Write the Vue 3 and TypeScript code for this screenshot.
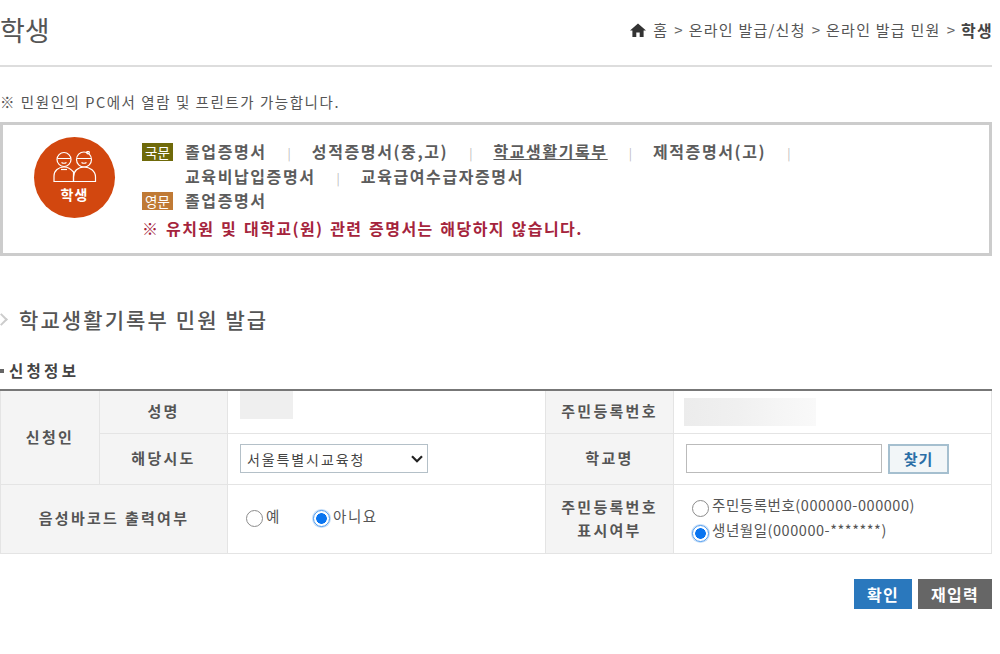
<template>
  <div class="page">
    <header class="top">
      <h1 class="title">학생</h1>
      <nav class="crumbs">
        <svg class="home" viewBox="0 0 16 14" width="16" height="14">
          <path d="M8 0.5 L16 7.5 H13.6 V14 H9.7 V9.5 H6.3 V14 H2.4 V7.5 H0 Z" fill="#333" />
        </svg>
        <span>홈</span><i>&gt;</i><span>온라인 발급/신청</span><i>&gt;</i><span>온라인 발급 민원</span><i>&gt;</i><b>학생</b>
      </nav>
    </header>

    <p class="note">※ 민원인의 PC에서 열람 및 프린트가 가능합니다.</p>

    <section class="infobox">
      <div class="badge">
        <svg viewBox="0 0 44 32" width="44" height="32" fill="none" stroke="#fff" stroke-width="1.2">
          <circle cx="11" cy="8.5" r="7" />
          <circle cx="31" cy="8.5" r="7.5" />
          <circle cx="35" cy="1.6" r="1.3" />
          <path d="M4.5 7.5 H17.5 M24 7.5 H38 M8.5 11.5 Q11 13 13.5 11.5 M28.5 11.5 Q31 13 33.5 11.5" />
          <path d="M1 30.5 V25 C1 19.5 5.5 16 11 16 C15 16 18 18 20.5 21 V30.5 Z" />
          <path d="M20.5 30.5 V26 C20.5 20 25 16 31 16 C37 16 42.5 20 42.5 26 V30.5 Z" />
          <path d="M8 18.5 H14" />
        </svg>
        <span>학생</span>
      </div>
      <div class="certs">
        <div class="cert-row">
          <span class="tag kor">국문</span>
          <div class="links">
            <template v-for="(name, i) in korCerts" :key="name">
              <a :class="{ active: name === '학교생활기록부' }">{{ name }}</a>
              <em v-if="i !== korCerts.length - 1">|</em>
            </template>
          </div>
        </div>
        <div class="cert-row">
          <span class="tag eng">영문</span>
          <div class="links"><a>졸업증명서</a></div>
        </div>
        <p class="warn">※ 유치원 및 대학교(원) 관련 증명서는 해당하지 않습니다.</p>
      </div>
    </section>

    <h2 class="section-title"><i class="chev"></i>학교생활기록부 민원 발급</h2>
    <h3 class="sub-title">신청정보</h3>

    <table class="form">
      <colgroup>
        <col style="width: 99px" />
        <col style="width: 128px" />
        <col style="width: 318px" />
        <col style="width: 128px" />
        <col />
      </colgroup>
      <tbody>
        <tr class="r1">
          <th rowspan="2">신청인</th>
          <th>성명</th>
          <td><div class="blur name"></div></td>
          <th>주민등록번호</th>
          <td><div class="blur rrn"></div></td>
        </tr>
        <tr class="r2">
          <th>해당시도</th>
          <td>
            <div class="select-wrap">
              <select class="sido">
                <option>서울특별시교육청</option>
              </select>
              <svg class="caret" viewBox="0 0 12 8" width="12" height="8">
                <path d="M1 1.2 L6 6.2 L11 1.2" fill="none" stroke="#222" stroke-width="2.2" />
              </svg>
            </div>
          </td>
          <th>학교명</th>
          <td class="school">
            <input type="text" class="school-input" />
            <button class="find">찾기</button>
          </td>
        </tr>
        <tr class="r3">
          <th colspan="2">음성바코드 출력여부</th>
          <td>
            <div class="radios">
              <label><input type="radio" name="voice" />예</label>
              <label><input type="radio" name="voice" checked />아니요</label>
            </div>
          </td>
          <th>주민등록번호<br />표시여부</th>
          <td>
            <div class="radios stack">
              <label><input type="radio" name="show" />주민등록번호(000000-000000)</label>
              <label><input type="radio" name="show" checked />생년월일(000000-*******)</label>
            </div>
          </td>
        </tr>
      </tbody>
    </table>

    <div class="actions">
      <button class="btn ok">확인</button>
      <button class="btn reset">재입력</button>
    </div>
  </div>
</template>

<script setup lang="ts">
const korCerts: string[] = [
  "졸업증명서",
  "성적증명서(중,고)",
  "학교생활기록부",
  "제적증명서(고)",
  "교육비납입증명서",
  "교육급여수급자증명서",
];
</script>

<style>
body {
  background: #fff;
}
</style>

<style scoped>
.page {
  width: 992px;
  height: 654px;
  overflow: hidden;
  font-family: "Noto Sans CJK KR", "Liberation Sans", sans-serif;
  color: #555;
  font-size: 14px;
}

.top {
  display: flex;
  justify-content: space-between;
  align-items: center;
  height: 59px;
  padding-bottom: 6px;
  border-bottom: 2px solid #ddd;
}
.title {
  margin: 0;
  font-size: 27px;
  font-weight: 400;
  line-height: 59px;
  color: #555;
}
.crumbs {
  display: flex;
  align-items: center;
  gap: 6px;
  font-size: 15px;
  letter-spacing: 1.25px;
  color: #555;
}
.crumbs i {
  font-style: normal;
  color: #666;
  letter-spacing: 0;
}
.crumbs b {
  color: #444;
  font-size: 16px;
  font-weight: 700;
  letter-spacing: 1.3px;
  margin-right: -1px;
}
.home {
  margin-right: 1px;
}

.note {
  margin: 25px 0 0;
  height: 30px;
  line-height: 20px;
  font-size: 14.5px;
  letter-spacing: 1.55px;
  color: #555;
}

.infobox {
  display: flex;
  height: 134px;
  box-sizing: border-box;
  border: 3px solid #ccc;
  padding: 12px 0 0 31px;
}
.badge {
  width: 81px;
  height: 81px;
  flex: none;
  border-radius: 50%;
  background: #d2470f;
  color: #fff;
  display: flex;
  flex-direction: column;
  align-items: center;
  padding-top: 14px;
  box-sizing: border-box;
  font-size: 14px;
  font-weight: 700;
  letter-spacing: 1px;
  line-height: 22px;
}
.certs {
  margin-left: 27px;
  padding-top: 2px;
  width: 700px;
}
.cert-row {
  display: flex;
}
.tag {
  flex: none;
  width: 31px;
  height: 18px;
  margin-top: 4px;
  line-height: 18px;
  text-align: center;
  color: #fff;
  font-size: 13.5px;
}
.kor {
  background: #6f6a0a;
}
.eng {
  background: #c07a35;
}
.links {
  margin-left: 12px;
  font-size: 16px;
  font-weight: 700;
  line-height: 24.5px;
  letter-spacing: 1.6px;
  color: #5c5c5c;
}
.links a {
  white-space: nowrap;
}
.links a.active {
  text-decoration: underline;
}
.links em {
  font-style: normal;
  font-weight: 400;
  color: #bbb;
  font-size: 12px;
  line-height: 1;
  letter-spacing: 0;
  margin: 0 21px;
}
.warn {
  margin: 3px 0 0;
  font-size: 16px;
  font-weight: 700;
  line-height: 24px;
  letter-spacing: 1.45px;
  word-spacing: 1.5px;
  color: #a5243c;
}

.section-title {
  margin: 46px 0 0;
  height: 34px;
  display: flex;
  align-items: center;
  font-size: 21px;
  font-weight: 500;
  letter-spacing: 2.1px;
  color: #555;
}
.chev {
  width: 7px;
  height: 7px;
  border-top: 2px solid #ccc;
  border-right: 2px solid #ccc;
  transform: rotate(45deg);
  margin: 0 13px 0 -3px;
}
.sub-title {
  position: relative;
  margin: 22px 0 0;
  padding-left: 9px;
  height: 24px;
  line-height: 24px;
  font-size: 15.5px;
  font-weight: 700;
  letter-spacing: 3.3px;
  color: #444;
}
.sub-title::before {
  content: "";
  position: absolute;
  left: 0;
  top: 11px;
  width: 4px;
  height: 4px;
  background: #666;
}

.form {
  width: 992px;
  margin-top: 7px;
  table-layout: fixed;
  border-collapse: collapse;
  border-top: 2px solid #777;
}
.form th,
.form td {
  border: 1px solid #e4e4e4;
  padding: 0;
}
.form th {
  background: #f4f4f4;
  color: #555;
  font-weight: 700;
  font-size: 15px;
  letter-spacing: 2.3px;
  line-height: 23px;
  text-align: center;
  padding-bottom: 2px;
}
.form td {
  padding-left: 12px;
  color: #555;
}
.r1 {
  height: 43px;
}
.r2 {
  height: 51px;
}
.r3 {
  height: 69px;
}
.blur {
  background: #efefef;
}
.name {
  width: 53px;
  height: 28px;
  margin-top: -14px;
}
.rrn {
  width: 132px;
  height: 28px;
  margin: 0 0 0 -2px;
  background: linear-gradient(90deg, #ececec, #f0f0f0 40%, #f5f5f5 70%, #f9f9f9);
}
.select-wrap {
  position: relative;
  width: 188px;
}
.sido {
  appearance: none;
  width: 188px;
  height: 29px;
  padding-left: 6px;
  border: 1px solid #b4c0c8;
  border-radius: 0;
  background: #fff;
  color: #444;
  font-family: inherit;
  font-size: 14px;
  letter-spacing: 1.9px;
  display: block;
}
.caret {
  position: absolute;
  right: 5px;
  top: 11px;
}
.school {
  white-space: nowrap;
}
.school-input {
  width: 196px;
  height: 29px;
  box-sizing: border-box;
  border: 1px solid #bbb;
  vertical-align: middle;
}
.find {
  width: 61px;
  height: 30px;
  margin-left: 6px;
  padding: 0;
  vertical-align: middle;
  border: 2px solid #a5bfcf;
  background: #f2f6f8;
  color: #2a6ea6;
  font-family: inherit;
  font-size: 15px;
  font-weight: 700;
  letter-spacing: 1px;
}
.radios {
  display: flex;
  gap: 32px;
  margin-top: -6px;
  padding-left: 6px;
  font-size: 14.5px;
  letter-spacing: 1.6px;
}
.radios.stack {
  flex-direction: column;
  gap: 1px;
  margin-top: -2px;
  letter-spacing: 0.55px;
}
.radios label {
  display: flex;
  align-items: center;
  line-height: 24px;
  white-space: nowrap;
}
.radios input {
  appearance: none;
  box-sizing: border-box;
  width: 17px;
  height: 17px;
  margin: 6px 3px 0 0;
  border: 1.5px solid #8c8c8c;
  border-radius: 50%;
  background: #fff;
  flex: none;
}
.radios input:checked {
  border-color: #4a98ee;
  background: radial-gradient(circle, #0a75f0 0, #0a75f0 5px, #fff 5.6px);
  box-shadow: 0 0 0 1px #c5def8;
}
.actions {
  display: flex;
  justify-content: flex-end;
  gap: 6px;
  margin-top: 25px;
}
.btn {
  height: 30px;
  padding: 0;
  border: 0;
  color: #fff;
  font-family: inherit;
  font-size: 16px;
  font-weight: 700;
  letter-spacing: 1.3px;
}
.ok {
  width: 58px;
  background: #2a78bd;
}
.reset {
  width: 74px;
  background: #666;
}
</style>
